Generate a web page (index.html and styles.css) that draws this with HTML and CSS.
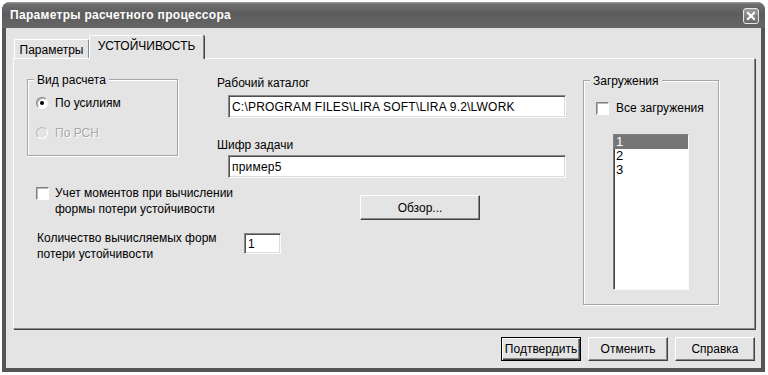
FILE: index.html
```html
<!DOCTYPE html>
<html lang="ru">
  <head>
    <meta charset="UTF-8" />
    <title>Параметры расчетного процессора</title>
    <link rel="stylesheet" href="styles.css">
  </head>
  <body>
    <div class="window">
      <div class="titlebar">
        <span class="title">Параметры расчетного процессора</span>
        <button class="close-btn" aria-label="Закрыть">
          <svg width="14" height="14" viewBox="0 0 14 14">
            <path d="M4 4 L10 10 M10 4 L4 10" stroke="#fff" stroke-width="2.2" stroke-linecap="square" />
          </svg>
        </button>
      </div>

      <div class="dialog-body">
        <!-- Tabs -->
        <div class="tabs">
          <div class="tab">Параметры</div>
          <div class="tab active">УСТОЙЧИВОСТЬ</div>
        </div>

        <div class="panel">
          <!-- Left column -->
          <div class="col-left">
            <div class="group group-calc">
              <span class="group-title">Вид расчета</span>
              <label class="radio-row">
                <span class="radio checked"></span>
                По усилиям
              </label>
              <label class="radio-row disabled">
                <span class="radio"></span>
                По РСН
              </label>
            </div>

            <label class="check-row moments">
              <span class="checkbox"></span>
              <span>Учет моментов при вычислении<br />формы потери устойчивости</span>
            </label>

            <div class="count-row">
              <span class="count-label">Количество вычисляемых форм<br />потери устойчивости</span>
              <input class="field field-count" type="text" value="1" />
            </div>
          </div>

          <!-- Middle column -->
          <div class="col-mid">
            <div class="field-label">Рабочий каталог</div>
            <input class="field field-wide" type="text" value="C:\PROGRAM FILES\LIRA SOFT\LIRA 9.2\LWORK" />

            <div class="field-label second">Шифр задачи</div>
            <input class="field field-wide" type="text" value="пример5" />

            <button class="btn btn-browse">Обзор...</button>
          </div>

          <!-- Right column -->
          <div class="col-right">
            <div class="group group-loads">
              <span class="group-title">Загружения</span>
              <label class="check-row all-loads">
                <span class="checkbox"></span>
                <span>Все загружения</span>
              </label>
              <div class="listbox">
                <div class="list-item selected">1</div>
                <div class="list-item">2</div>
                <div class="list-item">3</div>
              </div>
            </div>
          </div>
        </div>

        <div class="actions">
          <button class="btn btn-default">Подтвердить</button>
          <button class="btn">Отменить</button>
          <button class="btn">Справка</button>
        </div>
      </div>
    </div>
  </body>
</html>
```

FILE: styles.css
```css
/* Reset some basic styles */
* {
  margin: 0;
  padding: 0;
  box-sizing: border-box;
}

body {
  font-family: "Liberation Sans", Arial, sans-serif;
  font-size: 12px;
  color: #000;
  background: #fff;
}

/* Window frame */
.window {
  margin: 2px 0 0 2px;
  width: 763px;
  height: 370px;
  background: #555;
  border-radius: 8px 8px 0 0;
  padding: 0 4px 4px;
  display: flex;
  flex-direction: column;
}

.titlebar {
  height: 26px;
  margin: 0 -4px;
  padding: 0 6px 0 8px;
  border-radius: 8px 8px 0 0;
  background: linear-gradient(to bottom, #a4a4a4 0, #6e6e6e 2px, #5c5c5c 45%, #666 100%);
  display: flex;
  align-items: center;
  justify-content: space-between;
}

.title {
  color: #fff;
  font-weight: bold;
  font-size: 12px;
  letter-spacing: 0.3px;
}

.close-btn {
  width: 16px;
  height: 16px;
  margin-top: 1px;
  border: 1px solid #e8e8e8;
  border-radius: 3px;
  background: linear-gradient(to bottom, #a0a0a0, #666);
  display: flex;
  align-items: center;
  justify-content: center;
}

.dialog-body {
  flex: 1;
  background: #e4e4e4;
  padding: 7px 6px 7px 7px;
  display: flex;
  flex-direction: column;
}

/* Tabs */
.tabs {
  display: flex;
  align-items: flex-end;
  height: 24px;
  margin-bottom: -1px;
  position: relative;
  z-index: 1;
}

.tab {
  height: 19px;
  margin-bottom: 1px;
  margin-left: 1px;
  width: 75px;
  line-height: 20px;
  text-align: center;
  background: #e4e4e4;
  border-top: 1px solid #fff;
  border-left: 1px solid #fff;
  border-right: 1px solid #8a8a8a;
  border-radius: 2px 2px 0 0;
}

.tab.active {
  height: 24px;
  margin: 0;
  width: 115px;
  line-height: 20px;
  box-shadow: 1px 0 0 #444;
}

/* Tab panel */
.panel {
  height: 271px;
  border: 1px solid;
  border-color: #fff #8a8a8a #8a8a8a #fff;
  box-shadow: 1px 1px 0 #444;
  padding-left: 13px;
  display: flex;
}

.col-left {
  width: 190px;
  padding-top: 20px;
  white-space: nowrap;
}

.col-mid {
  width: 366px;
  padding-top: 16px;
  display: flex;
  flex-direction: column;
  align-items: flex-start;
}

.col-right {
  width: 136px;
  padding-top: 21px;
}

/* Group boxes */
.group {
  position: relative;
  border: 1px solid #a6a6a6;
  box-shadow: 1px 1px 0 #fff, inset 1px 1px 0 #fff;
}

.group-title {
  position: absolute;
  top: -8px;
  left: 6px;
  padding: 0 3px;
  line-height: 16px;
  background: #e4e4e4;
}

.group-calc {
  width: 151px;
  height: 77px;
  padding: 15px 0 0 8px;
}

.radio-row {
  display: flex;
  align-items: center;
  gap: 7px;
  height: 16px;
}

.radio-row + .radio-row {
  margin-top: 14px;
}

.radio-row.disabled {
  color: #a8a8a8;
  text-shadow: 1px 1px 0 #fff;
}

.radio {
  width: 12px;
  height: 12px;
  border-radius: 50%;
  border: 1px solid;
  border-color: #808080 #fff #fff #808080;
  background: #fff;
  box-shadow: inset 1px 1px 0 #b0b0b0;
  position: relative;
}

.radio.checked::after {
  content: "";
  position: absolute;
  top: 3px;
  left: 3px;
  width: 4px;
  height: 4px;
  border-radius: 50%;
  background: #000;
}

.radio-row.disabled .radio {
  background: #e4e4e4;
  border-color: #b8b8b8 #fff #fff #b8b8b8;
  box-shadow: none;
}

/* Checkboxes */
.check-row {
  display: flex;
  align-items: flex-start;
  line-height: 16px;
}

.checkbox {
  flex: none;
  width: 13px;
  height: 13px;
  background: #fff;
  border: 1px solid;
  border-color: #808080 #fff #fff #808080;
  box-shadow: inset 1px 1px 0 #b8b8b8;
}

.moments {
  margin-top: 29px;
  padding-left: 9px;
  gap: 6px;
}

.moments .checkbox {
  margin-top: 2px;
}

.count-row {
  margin-top: 13px;
  padding-left: 10px;
  display: flex;
  align-items: flex-start;
  line-height: 16px;
}

.count-label {
  width: 207px;
  flex: none;
}

/* Text fields */
.field {
  height: 23px;
  padding: 0 3px;
  font: inherit;
  color: #000;
  background: #fff;
  border: 1px solid;
  border-color: #8a8a8a #fafafa #fafafa #8a8a8a;
  box-shadow: inset 1px 1px 0 #505050, inset -1px -1px 0 #dcdcdc;
  outline: none;
}

.field-count {
  width: 37px;
  height: 21px;
  margin-top: 3px;
}

.field-label {
  line-height: 16px;
}

.field-label.second {
  margin-top: 19px;
}

.field-wide {
  width: 338px;
  margin: 4px 0 0 11px;
  letter-spacing: 0.2px;
}

.field-label.second + .field-wide {
  margin-top: 2px;
}

/* Buttons */
.btn {
  width: 80px;
  height: 24px;
  font: inherit;
  color: #000;
  background: #e4e4e4;
  border: 1px solid;
  border-color: #fff #404040 #404040 #fff;
  box-shadow: inset -1px -1px 0 #8a8a8a;
}

.btn-default {
  border-color: #000;
  box-shadow: inset 1px 1px 0 #fff, inset -1px -1px 0 #404040, inset -2px -2px 0 #8a8a8a;
}

.btn-browse {
  width: 120px;
  height: 25px;
  margin: 17px 0 0 143px;
}

.actions {
  margin-top: 8px;
  display: flex;
  justify-content: flex-end;
  gap: 7px;
}

/* Loads group */
.group-loads {
  width: 136px;
  height: 225px;
  padding-left: 12px;
}

.all-loads {
  margin-top: 19px;
  align-items: center;
  gap: 7px;
}

.listbox {
  width: 76px;
  height: 156px;
  margin: 18px 0 0 17px;
  background: #fff;
  border: 1px solid;
  border-color: #808080 #fafafa #fafafa #808080;
  box-shadow: inset 1px 1px 0 #404040;
  font-size: 13px;
}

.list-item {
  height: 14px;
  line-height: 14px;
  padding-left: 2px;
}

.list-item.selected {
  background: #767676;
  color: #fff;
}
```
